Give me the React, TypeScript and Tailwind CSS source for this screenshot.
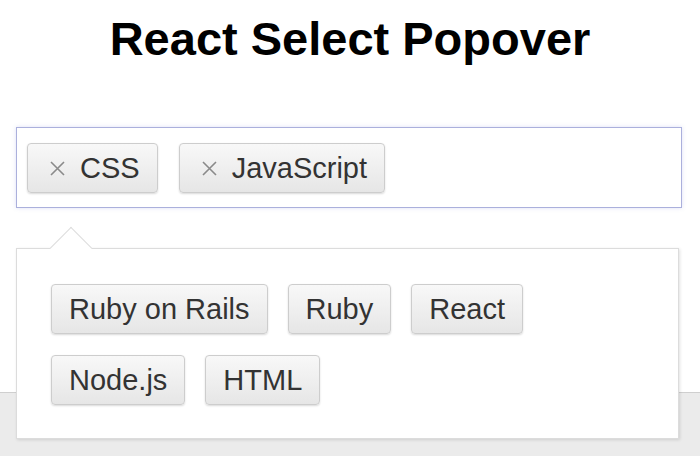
const selected = ["CSS", "JavaScript"];
const options = [
  ["Ruby on Rails", "Ruby", "React"],
  ["Node.js", "HTML"],
];

const RemoveIcon = () => (
  <svg width="17" height="15" viewBox="0 0 17 15" className="shrink-0">
    <path d="M2 1 L15 14 M15 1 L2 14" stroke="#8a8a8a" strokeWidth="1.6" fill="none" />
  </svg>
);

const Chip = ({ label, removable }: { label: string; removable?: boolean }) => (
  <div
    className={`flex items-center h-[50px] rounded-[4px] border border-[#cdcdcd] bg-[linear-gradient(to_bottom,#f8f8f8,#e6e6e6)] shadow-[0_1px_2px_rgba(0,0,0,0.15)] text-[29px] leading-none text-[#333] ${
      removable ? "pl-[21px] pr-[17px] gap-[14px]" : "px-[17px]"
    }`}
  >
    {removable && <RemoveIcon />}
    <span>{label}</span>
  </div>
);

export default function App() {
  return (
    <div className="h-[456px] overflow-hidden bg-[linear-gradient(to_bottom,#fff_392px,#cfcfcf_392px,#cfcfcf_393px,#ebebeb_393px)] font-['Liberation_Sans',Arial,sans-serif]">
      <h1 className="pt-[15px] text-center text-[47px] font-bold leading-none text-black">
        React Select Popover
      </h1>

      <div className="mt-[65px] ml-4 mr-[18px] h-[81px] border border-[#abb0dc] bg-white shadow-[0_0_4px_rgba(120,130,220,0.25)] flex items-start gap-[21px] pl-[10px] pt-[15px]">
        {selected.map((s) => (
          <Chip key={s} label={s} removable />
        ))}
      </div>

      <div className="relative mt-[40px] ml-4 mr-[21px] border border-[#dcdcdc] bg-white shadow-[1px_1px_3px_rgba(0,0,0,0.12)] pl-[34px] pt-[35px] pb-[33px] flex flex-col gap-[21px]">
        <div className="absolute -top-[16px] left-[39px] w-[30px] h-[30px] rotate-45 border-t border-l border-[#dcdcdc] bg-white" />
        {options.map((row, i) => (
          <div key={i} className="relative flex gap-[20px]">
            {row.map((o) => (
              <Chip key={o} label={o} />
            ))}
          </div>
        ))}
      </div>
    </div>
  );
}
